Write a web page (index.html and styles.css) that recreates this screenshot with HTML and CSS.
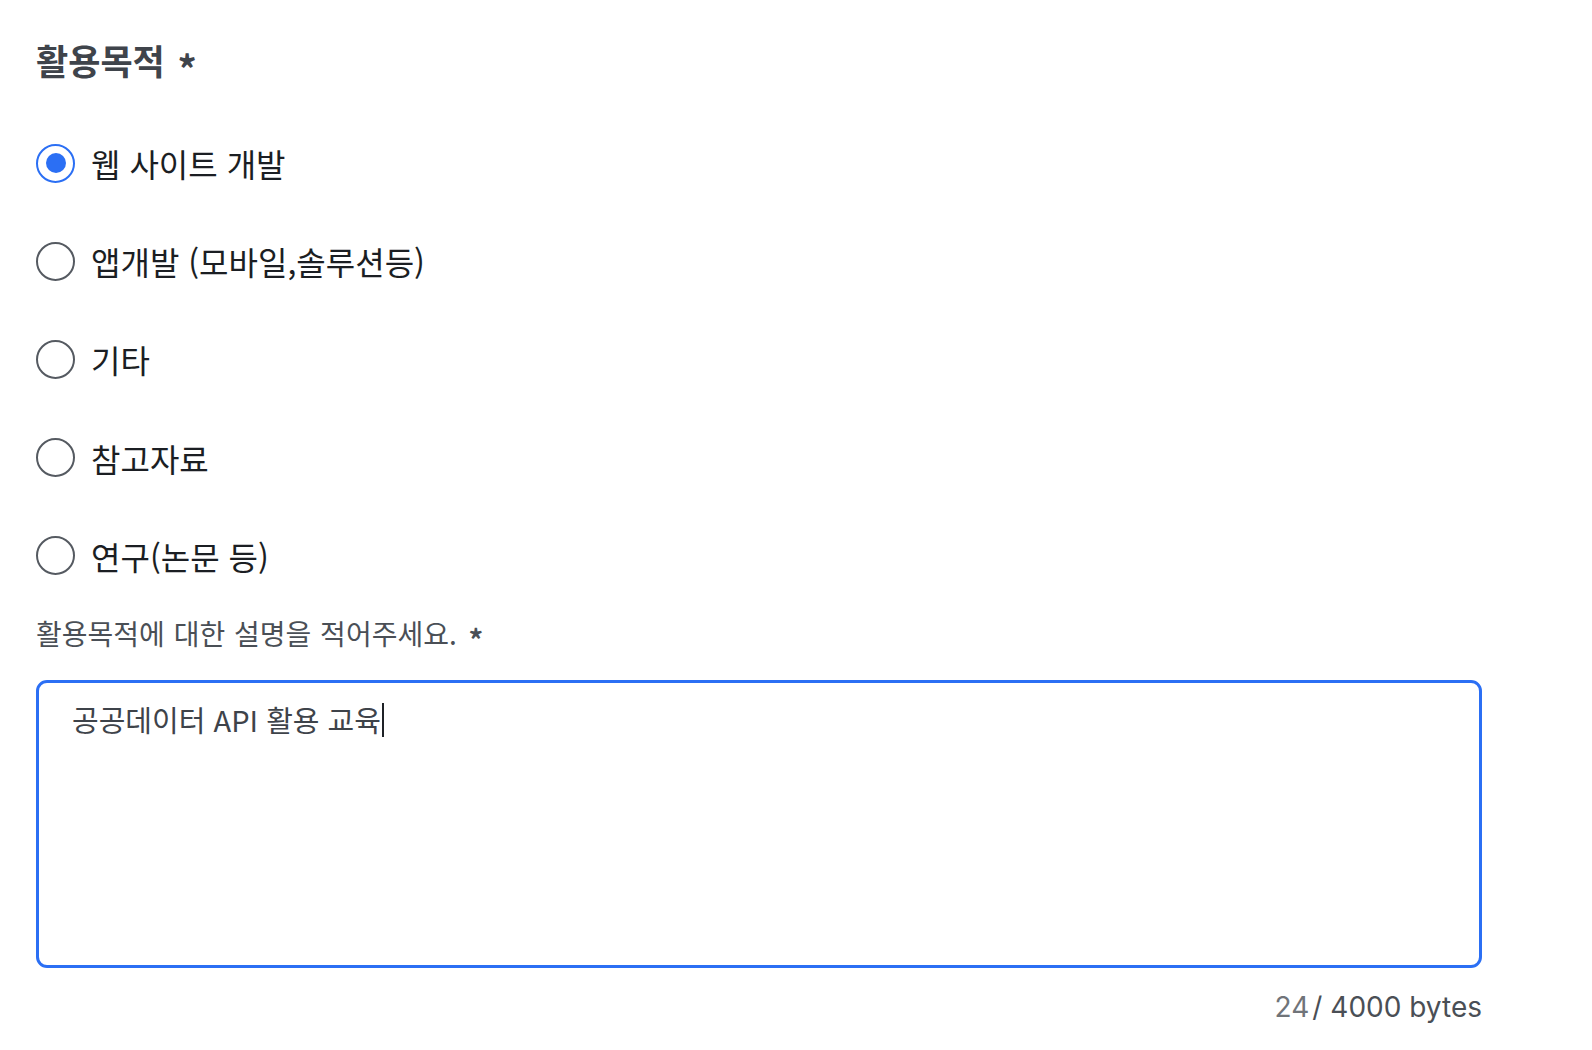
FILE: index.html
```html
<!DOCTYPE html>
<html lang="ko">
<head>
<meta charset="utf-8">
<title>활용목적</title>
<link rel="stylesheet" href="styles.css">
</head>
<body>
<main class="form">
  <h2 class="title">활용목적 <span class="req">*</span></h2>
  <div class="options">
    <label class="option"><span class="radio checked"></span><span class="opt-text">웹 사이트 개발</span></label>
    <label class="option"><span class="radio"></span><span class="opt-text">앱개발 (모바일,솔루션등)</span></label>
    <label class="option"><span class="radio"></span><span class="opt-text">기타</span></label>
    <label class="option"><span class="radio"></span><span class="opt-text">참고자료</span></label>
    <label class="option"><span class="radio"></span><span class="opt-text">연구(논문 등)</span></label>
  </div>
  <p class="desc-label">활용목적에 대한 설명을 적어주세요. <span class="req-small">*</span></p>
  <div class="textarea"><span class="ta-text">공공데이터 API 활용 교육</span><span class="caret"></span></div>
  <div class="counter"><span class="count">24</span><span class="max">/ 4000 bytes</span></div>
</main>
</body>
</html>
```
FILE: styles.css
```css
html, body {
  margin: 0;
  padding: 0;
  background: #ffffff;
}
body {
  font-family: "Noto Sans CJK KR", "Noto Sans", sans-serif;
}
.form {
  display: flex;
  flex-direction: column;
  align-items: flex-start;
  padding: 36px 0 0 36px;
  width: 1446px;
}
.title {
  margin: 0;
  font-size: 35px;
  line-height: 48px;
  font-weight: 700;
  color: #3f444b;
}
.req {
  font-size: 38px;
  display: inline-block;
  vertical-align: -9px;
  margin-left: 3px;
}
.options {
  display: flex;
  flex-direction: column;
  gap: 58.2px;
  margin-top: 51px;
}
.option {
  display: flex;
  align-items: center;
  height: 40px;
  gap: 16px;
}
.radio {
  box-sizing: border-box;
  width: 39px;
  height: 39px;
  border-radius: 50%;
  border: 2.5px solid #555a61;
  display: flex;
  align-items: center;
  justify-content: center;
  flex: none;
}
.radio.checked {
  border-color: #2b6ff4;
}
.radio.checked::after {
  content: "";
  width: 20px;
  height: 20px;
  border-radius: 50%;
  background: #2b6ff4;
}
.opt-text {
  font-size: 32px;
  line-height: 40px;
  font-weight: 400;
  color: #1b1e23;
}
.desc-label {
  margin: 39px 0 0 0;
  font-size: 28px;
  line-height: 36px;
  color: #4a4f56;
  word-spacing: 1px;
}
.req-small {
  display: inline-block;
  font-size: 29px;
  font-weight: 700;
  vertical-align: -6px;
  margin-left: 3px;
}
.textarea {
  box-sizing: border-box;
  margin-top: 24px;
  width: 1446px;
  height: 288px;
  border: 3px solid #2b6ff4;
  border-radius: 11px;
  padding: 16px 33px;
  font-size: 29px;
  line-height: 40px;
  color: #3e434a;
  display: flex;
  align-items: flex-start;
}
.caret {
  display: inline-block;
  width: 2px;
  height: 34px;
  margin-top: 4px;
  margin-left: 1px;
  background: #1f2227;
}
.counter {
  align-self: flex-end;
  margin-top: 19px;
  font-family: "Inter", "Noto Sans CJK KR", sans-serif;
  font-size: 28px;
  line-height: 40px;
  color: #4a4f56;
}
.count {
  color: #707479;
  margin-right: 3px;
}
```
